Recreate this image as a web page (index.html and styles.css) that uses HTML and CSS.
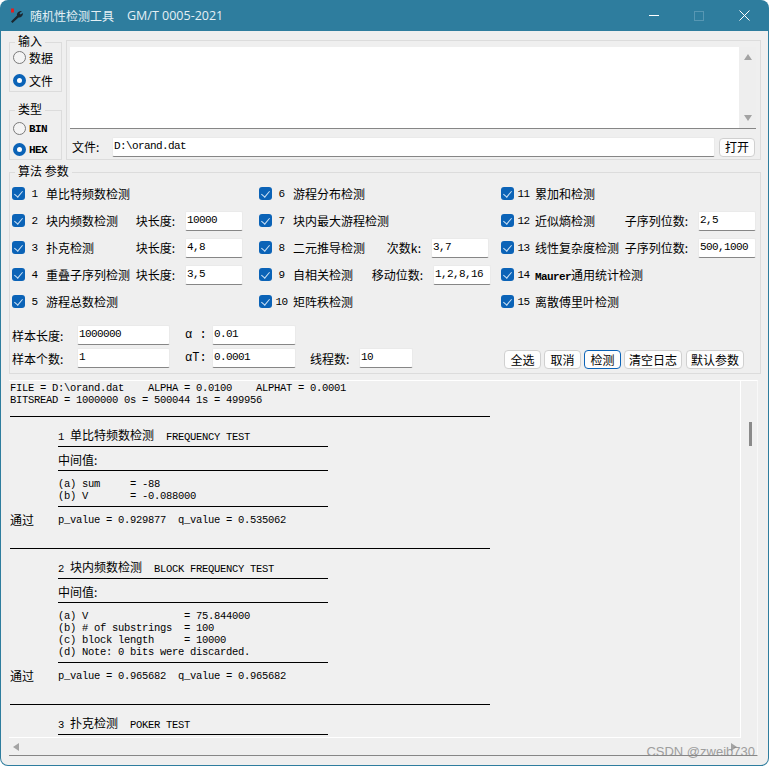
FILE: index.html
```html
<!DOCTYPE html>
<html lang="zh-CN">
<head>
  <meta charset="UTF-8">
  <title>随机性检测工具</title>
  <link rel="stylesheet" href="styles.css">
</head>
<body>
<div class="window">
  <div class="titlebar">
    <svg class="appIcon" width="16" height="16" viewBox="0 0 16 16">
      <path d="M2 13.5 L8 7.5 C7.5 5 9.5 3 13 3 L10.5 5.2 L11.5 6.5 L14 5 C14 8 12 9.8 9.5 9.5 L3.5 15 Z" fill="#1b2730"/>
      <rect x="2" y=".5" width="3" height="4" fill="#e02020"/>
    </svg>
    <span class="appName">随机性检测工具</span>
    <span class="appStd">GM/T 0005-2021</span>
    <div class="winButtons">
      <span class="minBtn"></span>
      <span class="maxBtn"></span>
      <svg class="closeBtn" width="11" height="11" viewBox="0 0 11 11"><path d="M.5 .5 L10.5 10.5 M10.5 .5 L.5 10.5" stroke="#fff" fill="none"/></svg>
    </div>
  </div>

  <div class="client">
    <div class="topRow">
      <div class="sideGroups">
        <fieldset class="group radioGroup">
          <legend>输入</legend>
          <label class="radioRow"><input type="radio" name="src">数据</label>
          <label class="radioRow"><input type="radio" name="src" checked>文件</label>
        </fieldset>
        <fieldset class="group radioGroup kindGroup">
          <legend>类型</legend>
          <label class="radioRow mono"><input type="radio" name="kind">BIN</label>
          <label class="radioRow mono"><input type="radio" name="kind" checked>HEX</label>
        </fieldset>
      </div>
      <div class="inputBox">
        <div class="dataArea">
          <textarea class="dataText"></textarea>
          <div class="vBar">
            <span class="arrowUp"></span>
            <span class="arrowDown"></span>
          </div>
        </div>
        <div class="fileRow">
          <span class="fileLabel">文件:</span>
          <input class="field fileField" value="D:\orand.dat">
          <button class="btn openBtn">打开</button>
        </div>
      </div>
    </div>

    <fieldset class="group algGroup">
      <legend>算法 参数</legend>
      <div class="algGrid">
        <div class="cell"><input type="checkbox" checked><span class="num">1</span><span class="name">单比特频数检测</span></div>
        <div class="cell"><input type="checkbox" checked><span class="num">6</span><span class="name">游程分布检测</span></div>
        <div class="cell"><input type="checkbox" checked><span class="num">11</span><span class="name">累加和检测</span></div>

        <div class="cell"><input type="checkbox" checked><span class="num">2</span><span class="name">块内频数检测</span><span class="param">块长度:</span><input class="field small" value="10000"></div>
        <div class="cell"><input type="checkbox" checked><span class="num">7</span><span class="name">块内最大游程检测</span></div>
        <div class="cell"><input type="checkbox" checked><span class="num">12</span><span class="name">近似熵检测</span><span class="param">子序列位数:</span><input class="field small" value="2,5"></div>

        <div class="cell"><input type="checkbox" checked><span class="num">3</span><span class="name">扑克检测</span><span class="param">块长度:</span><input class="field small" value="4,8"></div>
        <div class="cell"><input type="checkbox" checked><span class="num">8</span><span class="name">二元推导检测</span><span class="param">次数k:</span><input class="field small" value="3,7"></div>
        <div class="cell"><input type="checkbox" checked><span class="num">13</span><span class="name">线性复杂度检测</span><span class="param">子序列位数:</span><input class="field small" value="500,1000"></div>

        <div class="cell"><input type="checkbox" checked><span class="num">4</span><span class="name">重叠子序列检测</span><span class="param">块长度:</span><input class="field small" value="3,5"></div>
        <div class="cell"><input type="checkbox" checked><span class="num">9</span><span class="name">自相关检测</span><span class="param">移动位数:</span><input class="field small shifted" value="1,2,8,16"></div>
        <div class="cell"><input type="checkbox" checked><span class="num">14</span><span class="name"><span class="latin">Maurer</span>通用统计检测</span></div>

        <div class="cell"><input type="checkbox" checked><span class="num">5</span><span class="name">游程总数检测</span></div>
        <div class="cell"><input type="checkbox" checked><span class="num">10</span><span class="name">矩阵秩检测</span></div>
        <div class="cell"><input type="checkbox" checked><span class="num">15</span><span class="name">离散傅里叶检测</span></div>
      </div>

      <div class="optGrid">
        <span>样本长度:</span><input class="field" value="1000000">
        <span class="alpha">α :</span><input class="field" value="0.01">
        <span></span><span></span><span></span>

        <span>样本个数:</span><input class="field" value="1">
        <span class="alpha">αT:</span><input class="field" value="0.0001">
        <span class="threads">线程数:</span><input class="field" value="10">
        <div class="actions">
          <button class="btn">全选</button>
          <button class="btn">取消</button>
          <button class="btn primary">检测</button>
          <button class="btn wide">清空日志</button>
          <button class="btn wide">默认参数</button>
        </div>
      </div>
    </fieldset>

    <div class="logBox">
      <div class="logMain">
        <div class="log">
          <div class="logHead">
            <div>FILE = D:\orand.dat&nbsp;&nbsp;&nbsp;&nbsp;ALPHA = 0.0100&nbsp;&nbsp;&nbsp;&nbsp;ALPHAT = 0.0001</div>
            <div>BITSREAD = 1000000 0s = 500044 1s = 499956</div>
          </div>

          <div class="test">
            <div class="testTitle">1 <span class="cn">单比特频数检测</span>&nbsp;&nbsp;FREQUENCY TEST</div>
            <div class="midTitle"><span class="cn">中间值:</span></div>
            <div class="values">
              <div>(a) sum&nbsp;&nbsp;&nbsp;&nbsp; = -88</div>
              <div>(b) V&nbsp;&nbsp;&nbsp;&nbsp;&nbsp;&nbsp; = -0.088000</div>
            </div>
            <div class="resultRow"><span class="pass">通过</span><span>p_value = 0.929877&nbsp;&nbsp;q_value = 0.535062</span></div>
          </div>

          <div class="test">
            <div class="testTitle">2 <span class="cn">块内频数检测</span>&nbsp;&nbsp;BLOCK FREQUENCY TEST</div>
            <div class="midTitle"><span class="cn">中间值:</span></div>
            <div class="values">
              <div>(a) V&nbsp;&nbsp;&nbsp;&nbsp;&nbsp;&nbsp;&nbsp;&nbsp;&nbsp;&nbsp;&nbsp;&nbsp;&nbsp;&nbsp;&nbsp; = 75.844000</div>
              <div>(b) # of substrings&nbsp; = 100</div>
              <div>(c) block length&nbsp;&nbsp;&nbsp;&nbsp; = 10000</div>
              <div>(d) Note: 0 bits were discarded.</div>
            </div>
            <div class="resultRow"><span class="pass">通过</span><span>p_value = 0.965682&nbsp;&nbsp;q_value = 0.965682</span></div>
          </div>

          <div class="test">
            <div class="testTitle">3 <span class="cn">扑克检测</span>&nbsp;&nbsp;POKER TEST</div>
          </div>
        </div>
        <div class="hBar"><span class="arrowLeft"></span><span class="arrowRight"></span></div>
      </div>
      <div class="logBar"><span class="thumb"></span></div>
    </div>
  </div>
  <div class="watermark">CSDN @zweib730</div>
</div>
</body>
</html>
```

FILE: styles.css
```css
* {
  box-sizing: border-box;
}

html, body {
  margin: 0;
  background: #fff;
}

body {
  width: 769px;
  height: 766px;
  overflow: hidden;
  font-family: "Noto Sans CJK SC", "Liberation Mono", sans-serif;
  font-size: 12px;
  color: #000;
}

.window {
  position: relative;
  height: 766px;
  display: flex;
  flex-direction: column;
  background: #2e7d9e;
  border-radius: 8px;
  padding: 0 1px 1px 1px;
  overflow: hidden;
}

.titlebar {
  height: 31px;
  flex: none;
  display: flex;
  align-items: center;
  padding-left: 8px;
  color: #e4f0f5;
}

.appIcon {
  margin-right: 5px;
}

.appName {
  font-size: 12px;
}

.appStd {
  font-family: "Open Sans", sans-serif;
  font-size: 12.5px;
  margin-left: 13px;
}

.winButtons {
  margin-left: auto;
  display: flex;
  align-items: center;
}

.minBtn {
  width: 10px;
  height: 1px;
  background: #fff;
  margin-right: 35px;
}

.maxBtn {
  width: 10px;
  height: 10px;
  border: 1px solid #5797b3;
  margin-right: 35px;
}

.closeBtn {
  margin-right: 18px;
}

.client {
  flex: 1;
  min-height: 0;
  background: #efefef;
  border-radius: 0 0 7px 7px;
  padding: 9px 7px 9px 8px;
  display: flex;
  flex-direction: column;
}

.topRow {
  display: flex;
  gap: 4px;
  height: 120px;
  flex: none;
}

.sideGroups {
  width: 53px;
  padding-top: 1px;
  display: flex;
  flex-direction: column;
  justify-content: space-between;
}

.group {
  margin: 0;
  min-width: 0;
  border: 1px solid #dcdcdc;
  padding: 0;
}

.group legend {
  padding: 0 3px;
  margin-left: 5px;
  height: 2px;
  line-height: 0;
  font-size: 12px;
}

.radioGroup {
  height: 51px;
  padding: 3px 0 0 3px;
}

.radioGroup legend {
  margin-left: 2px;
}

.kindGroup {
  padding-top: 7px;
}

.radioRow {
  display: flex;
  align-items: center;
  height: 23px;
  gap: 3px;
}

.mono {
  height: 21px;
  font-family: "Liberation Mono", monospace;
  font-size: 11px;
  font-weight: bold;
  letter-spacing: -.6px;
}

input[type=radio] {
  appearance: none;
  width: 13px;
  height: 13px;
  margin: 0;
  border-radius: 50%;
  border: 1px solid #7a7a7a;
  background: #f4f4f4;
}

input[type=radio]:checked {
  border: 4px solid #0b63b7;
  background: #fff;
}

.inputBox {
  flex: 1;
  border: 1px solid #dcdcdc;
  padding: 6px 4px 0 3px;
}

.dataArea {
  display: flex;
  height: 82px;
  background: #fff;
  border-bottom: 1px solid #868686;
}

.dataText {
  flex: 1;
  border: 0;
  outline: 0;
  resize: none;
  background: #fff;
  padding: 0;
}

.vBar {
  width: 17px;
  background: #eeeeee;
  display: flex;
  flex-direction: column;
  justify-content: space-between;
  align-items: center;
  padding: 7px 0;
}

.arrowUp, .arrowDown, .arrowLeft, .arrowRight {
  display: block;
  width: 0;
  height: 0;
  border: 4px solid transparent;
}

.arrowUp {
  border-top: 0;
  border-bottom: 6px solid #a3a3a3;
}

.arrowDown {
  border-bottom: 0;
  border-top: 6px solid #a3a3a3;
}

.arrowLeft {
  border-left: 0;
  border-right: 6px solid #a3a3a3;
}

.arrowRight {
  border-right: 0;
  border-left: 6px solid #a3a3a3;
}

.fileRow {
  display: flex;
  align-items: center;
  margin-top: 8px;
  height: 20px;
}

.fileLabel {
  width: 42px;
  padding: 0 0 2px 2px;
}

.field {
  height: 20px;
  min-width: 0;
  width: 100%;
  background: #fff;
  border: 1px solid #eaeaea;
  border-bottom: 1px solid #868686;
  border-radius: 2px;
  outline: 0;
  padding: 0 1px 2px 1px;
  font-family: "Liberation Mono", monospace;
  font-size: 11px;
  letter-spacing: -.6px;
  color: #000;
}

.fileField {
  flex: 1;
}

.btn {
  height: 19px;
  padding: 0;
  width: 37px;
  background: #fdfdfd;
  border: 1px solid #d0d0d0;
  border-radius: 4px;
  font-family: inherit;
  font-size: 12px;
  line-height: 16px;
  color: #000;
}

.btn.wide {
  width: 58px;
}

.btn.wide:last-child {
  margin-left: 1px;
}

.btn.primary {
  border-color: #0b63b7;
}

.openBtn {
  width: 36px;
  margin: 0 1px 0 4px;
}

.algGroup {
  margin-top: 11px;
  height: 203px;
  flex: none;
}

.algGrid {
  display: grid;
  grid-template-columns: 247px 242px 256px;
  grid-auto-rows: 27px;
  padding-left: 2px;
  margin-top: 7px;
}

.cell {
  display: flex;
  align-items: center;
}

input[type=checkbox] {
  appearance: none;
  position: relative;
  flex: none;
  width: 13px;
  height: 13px;
  margin: 0;
  border-radius: 3px;
  background: #0b63b7;
}

input[type=checkbox]::after {
  content: "";
  position: absolute;
  left: 4px;
  top: 2px;
  width: 4px;
  height: 7px;
  border: solid #cfe3f5;
  border-width: 0 1px 1px 0;
  transform: rotate(40deg);
}

.num {
  width: 21px;
  padding-right: 2px;
  text-align: center;
  font-family: "Liberation Mono", monospace;
  font-size: 11px;
  letter-spacing: -.6px;
}

.name {
  white-space: nowrap;
}

.latin {
  font-family: "Liberation Mono", monospace;
  font-size: 11px;
  font-weight: bold;
  letter-spacing: -.6px;
}

.param {
  margin-left: auto;
  margin-right: 10px;
  white-space: nowrap;
}

.small {
  width: 58px;
  flex: none;
  margin-right: 16px;
}

.cell:nth-child(3n) .small {
  margin-right: 1px;
}

.cell:nth-child(3n+2) .small {
  margin-right: 12px;
}

.cell:nth-child(3n+2) .small.shifted {
  margin-right: 10px;
}

.optGrid {
  display: grid;
  grid-template-columns: 65px 93px 42px 84px 63px 54px 1fr;
  grid-template-rows: 20px 20px;
  row-gap: 3px;
  align-items: center;
  padding-left: 2px;
  margin-top: 10px;
}

.alpha {
  padding-left: 15px;
  font-family: "Liberation Mono", monospace;
  white-space: nowrap;
}

.threads {
  padding-left: 14px;
  white-space: nowrap;
}

.actions {
  display: flex;
  justify-content: flex-end;
  gap: 3px;
  margin-top: 3px;
  padding-right: 16px;
}

.logBox {
  flex: 1;
  min-height: 0;
  margin-top: 6px;
  margin-right: 3px;
  display: flex;
  border-top: 1px solid #fff;
  border-right: 1px solid #f8f8f8;
  border-bottom: 1px solid #868686;
}

.logMain {
  flex: 1;
  min-width: 0;
  display: flex;
  flex-direction: column;
}

.log {
  flex: 1;
  min-height: 0;
  overflow: hidden;
  background: #f0f0f0;
  border: 1px solid #fff;
  border-width: 0 1px 1px 0;
  padding: 1px 0 0 1px;
  font-family: "Liberation Mono", monospace;
  font-size: 10.5px;
  letter-spacing: -.3px;
  line-height: 12px;
  white-space: nowrap;
}

.cn {
  font-family: "Noto Sans CJK SC", sans-serif;
  font-size: 12px;
  letter-spacing: 0;
}

.logHead {
  height: 34px;
}

.test {
  width: 480px;
  border-top: 1px solid #000;
  padding: 12px 0 22px 48px;
}

.testTitle, .midTitle, .values {
  width: 270px;
  border-bottom: 1px solid #000;
}

.testTitle {
  height: 18px;
}

.midTitle {
  height: 24px;
  padding-top: 7px;
}

.values {
  padding: 7px 0 4px;
}

.resultRow {
  display: flex;
  margin-left: -48px;
  margin-top: 7px;
  width: 320px;
}

.pass {
  width: 48px;
  font-family: "Noto Sans CJK SC", sans-serif;
  font-size: 12px;
  letter-spacing: 0;
}

.hBar {
  height: 17px;
  flex: none;
  display: flex;
  justify-content: space-between;
  align-items: center;
  padding: 0 4px;
}

.logBar {
  width: 16px;
  flex: none;
  position: relative;
}

.thumb {
  position: absolute;
  left: 8px;
  top: 41px;
  width: 3px;
  height: 24px;
  background: #8a8a8a;
}

.watermark {
  position: absolute;
  right: 14px;
  bottom: 7px;
  font-family: "Liberation Sans", sans-serif;
  font-size: 13px;
  color: #8a8a8a;
  opacity: .8;
}
```
